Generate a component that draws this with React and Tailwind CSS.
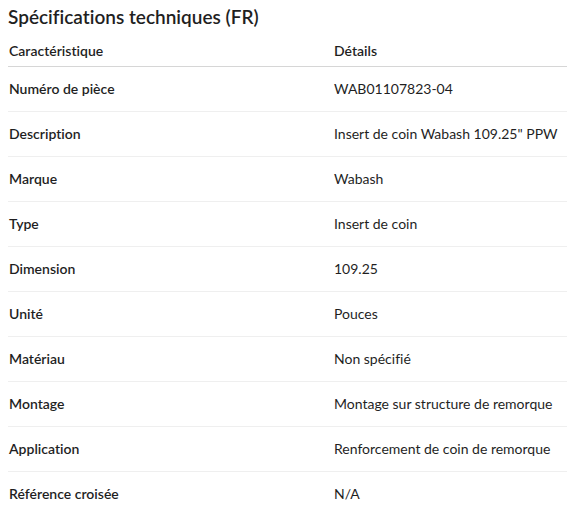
import React from 'react';

const specs = [
  ['Numéro de pièce', 'WAB01107823-04'],
  ['Description', 'Insert de coin Wabash 109.25" PPW'],
  ['Marque', 'Wabash'],
  ['Type', 'Insert de coin'],
  ['Dimension', '109.25'],
  ['Unité', 'Pouces'],
  ['Matériau', 'Non spécifié'],
  ['Montage', 'Montage sur structure de remorque'],
  ['Application', 'Renforcement de coin de remorque'],
  ['Référence croisée', 'N/A'],
];

export default function App() {
  return (
    <div
      className="min-h-[511px] bg-white pl-2 pt-[3px] text-[#1f1f1f] overflow-hidden"
      style={{ fontFamily: 'Lato, "Open Sans", sans-serif', fontVariantLigatures: 'none' }}
    >
      <h2 className="text-[19px] leading-[28px] font-semibold">Spécifications techniques (FR)</h2>
      <table className="w-[559px] border-collapse text-[14px]">
        <thead>
          <tr className="border-b border-[#d6d6d6]">
            <th className="text-left font-semibold pl-[1px] pt-[4px] w-[326px] h-[35px] whitespace-nowrap">Caractéristique</th>
            <th className="text-left font-semibold pt-[4px] whitespace-nowrap">Détails</th>
          </tr>
        </thead>
        <tbody>
          {specs.map(([k, v]) => (
            <tr key={k} className="border-b border-[#efefef] last:border-b-0">
              <td className="font-semibold pl-[1px] h-[45px] whitespace-nowrap">{k}</td>
              <td className="h-[45px] whitespace-nowrap">{v}</td>
            </tr>
          ))}
        </tbody>
      </table>
    </div>
  );
}
